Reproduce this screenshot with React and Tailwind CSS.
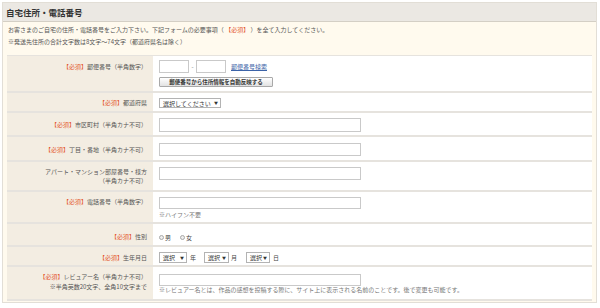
import React from 'react'

const FONT = { fontFamily: '"Noto Sans CJK JP", "Noto Sans", sans-serif' }

function Req() {
  return <span className="text-[#e4572e]">【必須】</span>
}

function Row({ h, pt, label, children }) {
  return (
    <div className={`flex border-b-2 border-[#e6e3de] ${h}`}>
      <div className={`w-[146px] shrink-0 bg-[#f3ede2] pr-[6px] text-right text-[#555] ${pt}`}>{label}</div>
      <div className={`flex-1 bg-white pl-[6px] ${pt}`}>{children}</div>
    </div>
  )
}

function TextInput({ className = 'w-[202px] h-[13px]' }) {
  return <div className={`border border-[#c9c9c9] bg-white ${className}`} />
}

function Select({ label, className }) {
  return (
    <div className={`flex items-center justify-between border border-[#b3b3b3] bg-white pl-[3px] pr-[2px] text-[#333] ${className}`}>
      <span>{label}</span>
      <span className="text-[4px]">▼</span>
    </div>
  )
}

function Radio({ label }) {
  return (
    <span className="flex items-center gap-[1px]">
      <span className="inline-block h-[5px] w-[5px] rounded-full border border-[#a8a8a8] bg-[#eee]" />
      <span>{label}</span>
    </span>
  )
}

export default function App() {
  return (
    <div className="min-h-[308px] bg-white pl-[2px] pt-[2px] text-[6px]" style={FONT}>
      <div className="w-[595px] border border-[#e2ded6]">
        <div className="flex h-[19px] items-center border-b border-[#d4cfc5] bg-[#ebe8e3] pl-[3px] text-[8.5px] font-bold text-[#333]">
          自宅住所・電話番号
        </div>
        <div className="bg-[#fffaee] px-[4px] pb-[1px]">
          <div className="pt-[2px] pl-[1px] pb-[7px] leading-[12px] text-[#555]">
            <p>お客さまのご自宅の住所・電話番号をご入力下さい。下記フォームの必要事項（ <Req /> ）を全て入力してください。</p>
            <p>※発送先住所の合計文字数は8文字～74文字（都道府県名は除く）</p>
          </div>

          <div className="border-t border-[#e6e3de]">
            <Row h="h-[37px]" pt="pt-[4px]" label={<span className="leading-[13px]"><Req />郵便番号（半角数字）</span>}>
              <div className="flex items-center">
                <TextInput className="h-[13px] w-[30px]" />
                <span className="w-[7px] text-center text-[#777]">-</span>
                <TextInput className="h-[13px] w-[30px]" />
                <a className="ml-[5px] text-[#3c63a8] underline">郵便番号検索</a>
              </div>
              <button className="mt-[4px] flex h-[10px] w-[114px] items-center justify-center rounded-[1px] border border-[#a9a9a9] bg-gradient-to-b from-white to-[#e2e2e2] text-[5.5px] font-bold text-[#333]">
                郵便番号から住所情報を自動反映する
              </button>
            </Row>

            <Row h="h-[20px]" pt="pt-[5px]" label={<div className="leading-[10px]"><Req />都道府県</div>}>
              <Select label="選択してください" className="h-[10px] w-[62px]" />
            </Row>

            <Row h="h-[24px]" pt="pt-[5px]" label={<div className="leading-[14px]"><Req />市区町村（半角カナ不可）</div>}>
              <TextInput className="h-[14px] w-[202px]" />
            </Row>

            <Row h="h-[25px]" pt="pt-[6px]" label={<div className="leading-[13px]"><Req />丁目・番地（半角カナ不可）</div>}>
              <TextInput />
            </Row>

            <Row h="h-[30px]" pt="pt-[5px]" label={<div className="leading-[9px]">アパート・マンション部屋番号・様方<br />（半角カナ不可）</div>}>
              <TextInput />
            </Row>

            <Row h="h-[32px]" pt="pt-[5px]" label={<div className="leading-[10px]"><Req />電話番号（半角数字）</div>}>
              <TextInput className="h-[12px] w-[202px]" />
              <p className="mt-[2px] leading-[8px] text-[#777]">※ハイフン不要</p>
            </Row>

            <Row h="h-[23px]" pt="pt-[8px]" label={<div className="leading-[10px]"><Req />性別</div>}>
              <div className="flex h-[10px] items-center gap-[9px] text-[#444]">
                <Radio label="男" />
                <Radio label="女" />
              </div>
            </Row>

            <Row h="h-[20px]" pt="pt-[5px]" label={<div className="leading-[11px]"><Req />生年月日</div>}>
              <div className="flex items-center text-[#444]">
                <Select label="選択" className="h-[11px] w-[28px]" />
                <span className="ml-[3px] mr-[8px]">年</span>
                <Select label="選択" className="h-[11px] w-[25px]" />
                <span className="ml-[2px] mr-[9px]">月</span>
                <Select label="選択" className="h-[11px] w-[24px]" />
                <span className="ml-[3px]">日</span>
              </div>
            </Row>

            <Row h="h-[34px]" pt="pt-[5px]" label={<div className="leading-[9.5px]"><Req />レビュアー名（半角カナ不可）<br />※半角英数20文字、全角10文字まで</div>}>
              <TextInput className="mt-[2px] h-[12px] w-[202px]" />
              <p className="leading-[7px] text-[#777]">※レビュアー名とは、作品の感想を投稿する際に、サイト上に表示される名前のことです。後で変更も可能です。</p>
            </Row>
          </div>
        </div>
      </div>
    </div>
  )
}
